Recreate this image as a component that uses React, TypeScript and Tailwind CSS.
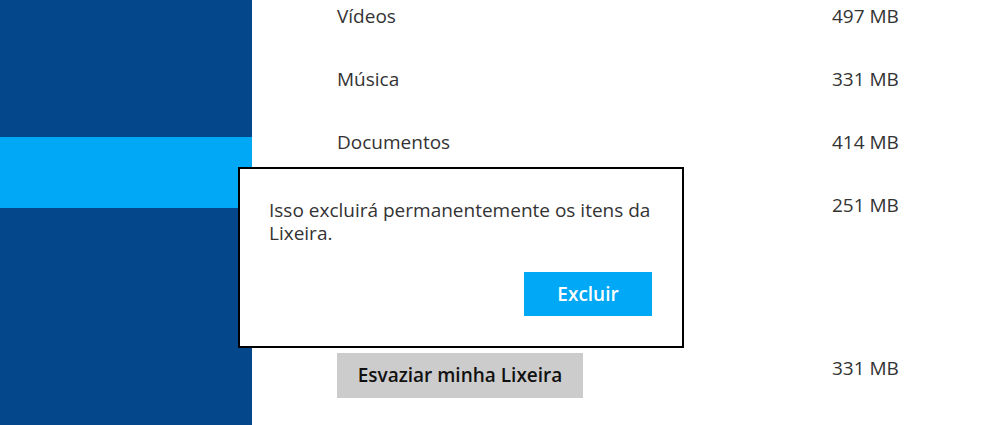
import React from "react";

const rows = [
  { label: "Vídeos", size: "497 MB" },
  { label: "Música", size: "331 MB" },
  { label: "Documentos", size: "414 MB" },
  { label: "", size: "251 MB" },
];

export default function App() {
  return (
    <div
      className="relative flex h-[425px] w-[984px] overflow-hidden bg-white text-[#333333]"
      style={{ fontFamily: '"Open Sans", "Noto Sans", Arial, sans-serif' }}
    >
      {/* sidebar */}
      <div className="flex w-[252px] shrink-0 flex-col bg-[#04488b]">
        <div className="h-[137px]" />
        <div className="h-[71px] bg-[#00a8f6]" />
      </div>

      {/* content */}
      <div className="flex flex-1 flex-col pl-[85px] pt-[4px]">
        <div className="flex flex-col gap-[39px]">
          {rows.map((r) => (
            <div key={r.size} className="flex h-6 w-[562px] items-center justify-between text-[19px] leading-6">
              <span>{r.label}</span>
              <span className="w-[67px] whitespace-nowrap">{r.size}</span>
            </div>
          ))}
        </div>
        <div className="mt-[136px] flex w-[562px] items-start justify-between">
          <button className="h-[45px] w-[246px] bg-[#cccccc] text-[19px] font-semibold text-[#111111]">
            Esvaziar minha Lixeira
          </button>
          <span className="mt-[3px] w-[67px] whitespace-nowrap text-[19px] leading-6">331 MB</span>
        </div>
      </div>

      {/* confirm dialog */}
      <div className="absolute left-[238px] top-[167px] flex h-[181px] w-[446px] flex-col justify-between border-2 border-black bg-white pb-[30px] pl-[29px] pr-[30px] pt-[30px]">
        <p className="text-[19px] leading-[23px] text-[#333333]">
          Isso excluirá permanentemente os itens da Lixeira.
        </p>
        <div className="flex justify-end">
          <button className="h-[44px] w-[128px] bg-[#00a8f6] text-[19px] font-semibold text-white">
            Excluir
          </button>
        </div>
      </div>
    </div>
  );
}
